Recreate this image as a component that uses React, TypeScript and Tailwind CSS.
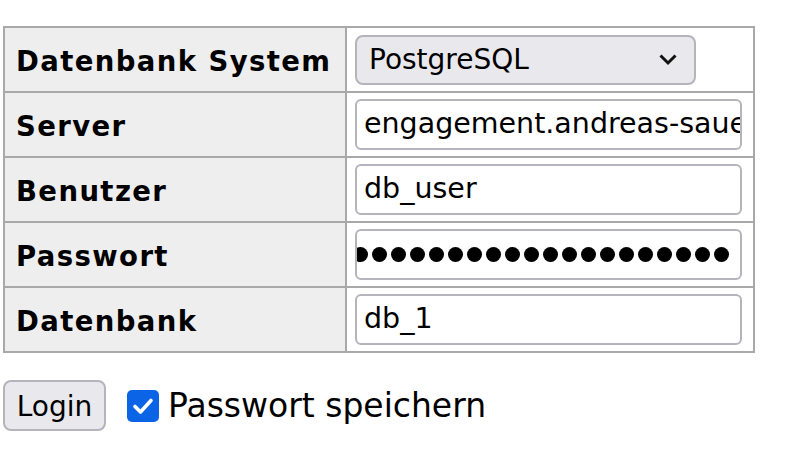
import { useState } from 'react'

const FONT = '[font-family:"DejaVu_Sans",Verdana,sans-serif]'

const ROWS: { label: string; value: string; type: string }[] = [
  { label: 'Server', value: 'engagement.andreas-sauer.de', type: 'text' },
  { label: 'Benutzer', value: 'db_user', type: 'text' },
  { label: 'Passwort', value: '', type: 'password' },
  { label: 'Datenbank', value: 'db_1', type: 'text' },
]

function Dots() {
  // the password field scrolled to its end, so the first dot is clipped on the left
  return (
    <div className="flex h-full items-center justify-end gap-[4px] overflow-hidden pr-[11px]">
      {Array.from({ length: 21 }).map((_, i) => (
        <span key={i} className="h-[15px] w-[15px] shrink-0 rounded-full bg-black" />
      ))}
    </div>
  )
}

export default function App() {
  const [remember, setRemember] = useState(true)

  return (
    <div className={`min-h-[452px] bg-white pl-[3px] pt-[26px] text-black ${FONT}`}>
      <table className="border-collapse">
        <tbody>
          <tr>
            <th className="h-[65px] w-[342px] border-2 border-[#a9a9a9] bg-[#eeeeee] pl-[11px] pt-[4px] text-left text-[27.5px] font-bold tracking-[1.4px]">
              Datenbank System
            </th>
            <td className="w-[408px] border-2 border-[#a9a9a9] pl-[8px]">
              <div className="flex h-[50px] w-[341px] items-center justify-between rounded-[8px] border-2 border-[#b4b4bc] bg-[#e9e9ed] pl-[12px] pr-[16px] text-[28px]">
                <span>PostgreSQL</span>
                <svg width="20" height="13" viewBox="0 0 20 13" fill="none">
                  <path d="M2.5 2.5 L10 10 L17.5 2.5" stroke="#111" strokeWidth="3" />
                </svg>
              </div>
            </td>
          </tr>
          {ROWS.map((r) => (
            <tr key={r.label}>
              <th className="h-[65px] border-2 border-[#a9a9a9] bg-[#eeeeee] pl-[11px] pt-[4px] text-left text-[27.5px] font-bold tracking-[1.4px]">
                {r.label}
              </th>
              <td className="border-2 border-[#a9a9a9] pl-[8px]">
                <div className="h-[51px] w-[387px] overflow-hidden rounded-[6px] border-2 border-[#b4b4bc] bg-white">
                  {r.type === 'password' ? (
                    <Dots />
                  ) : (
                    <div className="flex h-full items-center whitespace-nowrap pl-[7px] text-[28.5px]">{r.value}</div>
                  )}
                </div>
              </td>
            </tr>
          ))}
        </tbody>
      </table>

      <div className="mt-[27px] flex items-center">
        <button className="h-[51px] w-[103px] rounded-[8px] border-2 border-[#b4b4bc] bg-[#e9e9ed] pt-[3px] text-[28px]">
          Login
        </button>
        <label className="ml-[21px] flex items-center gap-[9px] text-[33px]">
          <span
            onClick={() => setRemember(!remember)}
            className={`flex h-[32px] w-[32px] items-center justify-center rounded-[5px] ${remember ? 'bg-[#0b63e5]' : 'border-2 border-[#767676] bg-white'}`}
          >
            {remember && (
              <svg width="22" height="18" viewBox="0 0 22 18" fill="none">
                <path d="M3 9.5 L8.5 15 L19 3.5" stroke="white" strokeWidth="3.6" strokeLinecap="round" strokeLinejoin="round" />
              </svg>
            )}
          </span>
          Passwort speichern
        </label>
      </div>
    </div>
  )
}
